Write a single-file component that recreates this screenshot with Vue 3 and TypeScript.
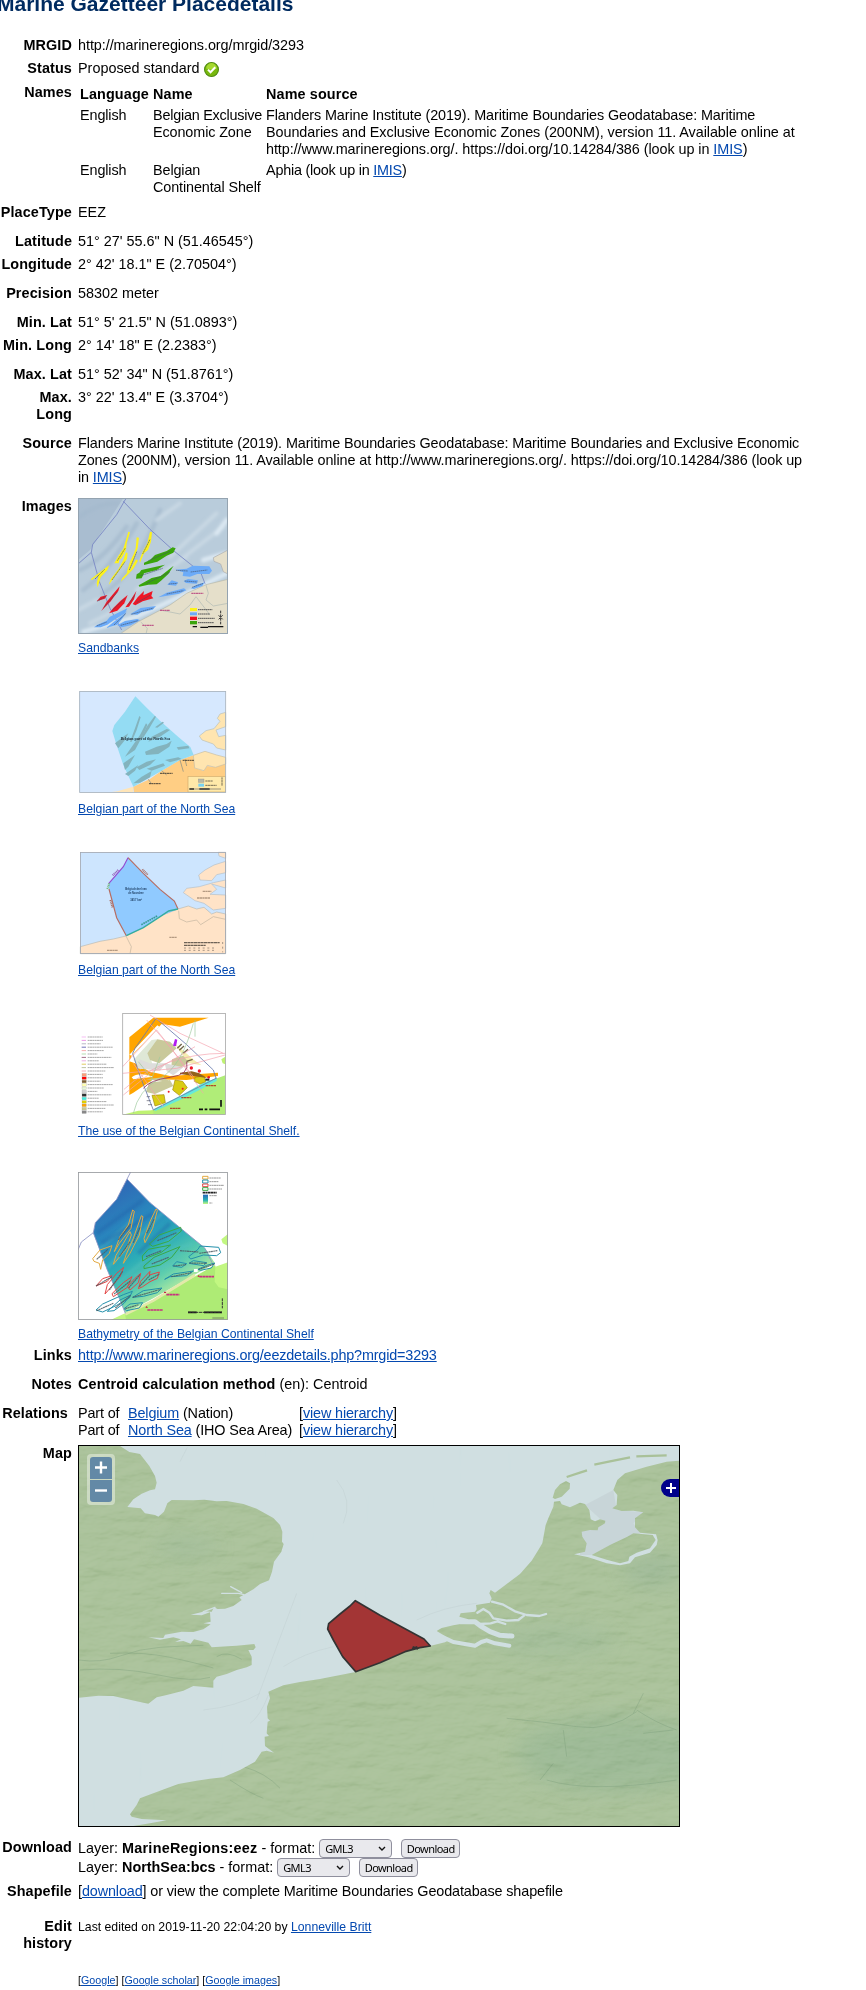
<script setup lang="ts">
interface Shape { d: string; c: string }

const layers = [
  { name: 'MarineRegions:eez', cls: 'spaced' },
  { name: 'NorthSea:bcs', cls: '' },
]
const relations = [
  { place: 'Belgium', kind: '(Nation)' },
  { place: 'North Sea', kind: '(IHO Sea Area)' },
]
const engines = ['Google', 'Google scholar', 'Google images']

const Y = '#fdf21c', G = '#3aa50c', R = '#ee1626', B = '#6cabf8'
const banks: Shape[] = [
  { c: Y, d: 'M175 125L180 127L170 160L168 180L155 204L148 210L146 220L133 220L145 198L160 176Z' },
  { c: Y, d: 'M200 142L207 143L203 175L190 212L176 247L170 248L180 215L192 190L197 175Z' },
  { c: Y, d: 'M240 125L246 127L243 155L234 180L222 190L210 218L208 212L218 185L232 160Z' },
  { c: Y, d: 'M168 187L173 190L171 206L155 232L116 285L122 268L145 238L160 210Z' },
  { c: Y, d: 'M198 208L204 212L190 236L153 275L157 264L180 240Z' },
  { c: Y, d: 'M62 268L118 225L112 240L92 262L83 292L80 280L86 255L66 270Z' },
  { c: G, d: 'M222 218L240 210L255 195L290 183L308 172L317 175L310 188L290 197L262 215L222 225Z' },
  { c: G, d: 'M208 248L214 240L285 224L260 240L222 250L215 265L198 266L200 253Z' },
  { c: G, d: 'M206 286L225 275L245 264L272 258L311 227L295 252L273 272L260 283L235 284L208 290Z' },
  { c: R, d: 'M80 334L92 320L112 315L104 326Z' },
  { c: R, d: 'M149 289L145 303L122 334L94 363L110 335Z' },
  { c: R, d: 'M173 315L163 340L142 362L117 370L130 354L152 332Z' },
  { c: R, d: 'M199 303L192 328L177 350L166 352L182 330Z' },
  { c: R, d: 'M222 303L220 316L248 303L244 318L250 325L218 334L196 346L188 342L203 322Z' },
  { c: B, d: 'M72 412L82 404L110 392L120 380L172 355L165 370L132 390L112 404L92 412Z' },
  { c: B, d: 'M160 374L172 362L158 384L142 404L108 414L130 397Z' },
  { c: B, d: 'M142 406L165 393L202 387L210 391L182 406L155 412Z' },
  { c: B, d: 'M180 373L212 354L258 348L248 359L214 367L202 374Z' },
  { c: B, d: 'M265 322L290 308L342 295L349 301L327 311Z' },
  { c: B, d: 'M292 284L305 271L324 277L318 287Z' },
  { c: B, d: 'M341 273L354 267L384 271L380 281L348 279Z' },
  { c: B, d: 'M316 239L350 236L368 227L418 229L426 242L418 252L382 252L360 260L338 258L340 247Z' },
  { c: B, d: 'M362 295L380 284L404 277L397 288L372 297Z' },
]
const greyBanks = [
  'M208 108L212 112L200 150L185 185L180 185L195 145Z', 'M254 108L258 110L238 145L215 180L210 182L230 140Z',
  'M228 130L232 134L222 160L195 210L165 230L175 215L210 165Z', 'M135 190L160 170L175 160L165 180L145 205Z',
  'M290 147L300 150L270 170L235 185L245 170Z', 'M278 125L282 128L262 143L255 142Z',
  'M225 215L260 200L290 192L305 182L298 200L265 222L228 225Z', 'M160 250L195 225L175 260L165 270Z',
  'M165 282L205 255L195 272L175 288Z', 'M200 262L230 245L258 238L240 255L208 270Z',
  'M190 310L215 290L245 273L240 292L210 308Z', 'M230 266L280 250L285 257L245 272Z',
  'M285 240L325 232L335 237L300 247Z', 'M320 202L355 197L358 205L325 209Z',
]
const bathyBanks: Shape[] = [
  { c: '#e3aa42', d: 'M188 150L193 154L183 205L148 250L133 275L150 230L175 195Z' },
  { c: '#e3aa42', d: 'M214 167L219 170L208 225L180 280L160 310L168 285L190 235Z' },
  { c: '#e3aa42', d: 'M258 147L262 151L248 205L225 248L222 235L240 185Z' },
  { c: '#e3aa42', d: 'M180 215L184 225L170 265L130 313L138 286L160 250Z' },
  { c: '#e3aa42', d: 'M68 296L90 270L126 257L118 280L98 300L92 328L88 310L72 304Z' },
  { c: '#39a944', d: 'M238 252L268 225L332 202L334 213L296 244L248 259Z' },
  { c: '#39a944', d: 'M217 288L235 268L302 255L274 277L235 292L218 303Z' },
  { c: '#39a944', d: 'M222 318L252 292L330 260L305 292L270 315L222 326Z' },
  { c: '#e44646', d: 'M161 322L150 350L105 402L112 374L140 340Z' },
  { c: '#e44646', d: 'M186 350L172 382L130 410L126 401L160 368Z' },
  { c: '#e44646', d: 'M212 340L205 368L180 390L172 380L195 355Z' },
  { c: '#e44646', d: 'M240 334L238 345L268 336L262 355L240 365L218 380L205 386L212 364Z' },
  { c: '#e44646', d: 'M78 378L98 356L126 347L112 364Z' },
  { c: '#2390ab', d: 'M78 450L98 432L160 404L187 394L178 414L140 436L98 456Z' },
  { c: '#2390ab', d: 'M112 454L150 420L182 405L162 430L132 452Z' },
  { c: '#2390ab', d: 'M162 446L180 432L218 428L208 444L170 452Z' },
  { c: '#2390ab', d: 'M188 412L220 392L276 384L262 398L220 409Z' },
  { c: '#2390ab', d: 'M284 358L310 342L370 333L350 347L300 350Z' },
  { c: '#2390ab', d: 'M308 318L320 305L350 311L335 322Z' },
  { c: '#2390ab', d: 'M357 310L370 302L410 308L400 317Z' },
  { c: '#2390ab', d: 'M356 290L384 268L390 258L446 262L452 278L440 287L400 285L362 297Z' },
  { c: '#2390ab', d: 'M384 328L410 316L434 309L424 324L392 331Z' },
]
const bankNames = [
  'M145 240L182 192', 'M148 290L180 245', 'M190 248L210 202', 'M230 220L252 178', 'M80 298L114 268',
  'M262 242L320 218', 'M228 290L274 272', 'M245 312L296 292', 'M78 378L126 350', 'M118 390L158 334',
  'M132 402L182 362', 'M176 384L210 344', 'M208 380L240 346', 'M236 360L268 342', 'M80 452L130 430',
  'M136 444L182 406', 'M166 446L206 434', 'M188 412L272 388', 'M304 350L364 338', 'M310 318L348 314',
  'M358 309L410 310', 'M330 272L386 276', 'M388 280L442 272', 'M386 328L434 312',
]
const useLegend: string[] = [
  '#f4b0f0', '#e884e0', '#aab', '#55a', '#f7a0a0', '#a5d8a0', '#905070', '#e7a0e0', '#d8c040', '#b0b890', '#f0a0b0',
  '#ffa07a', '#f00', '#806030', '#ffffb0', '#e8f8d8', '#d0d0d0', '#303030', '#40f0e0', '#e0d000', '#ffa500', '#c8c890', '#888',
]
const land = {
  england: 'M27 18L150 18L178 36L210 42L238 78L255 108L260 128L255 148L240 151L215 161L190 178L172 201L212 205L225 220L255 225L265 230L282 215L292 190L305 180L370 181L403 179L440 184L470 183L520 192L560 206L610 234L630 255L637 275L636 305L641 312L634 335L612 365L606 395L597 421L570 432L550 448L522 464L508 472L515 480L490 498L465 506L443 507L432 502L425 515L405 514L362 524L395 526L420 517L422 545L400 550L422 553L400 568L370 576L335 575L285 584L280 594L235 592L270 599L310 592L333 598L315 606L340 603L362 611L372 598L415 608L425 622L500 617L553 612L557 622L550 630L535 630L545 650L545 675L530 682L500 690L470 702L440 710L430 722L430 743L370 738L340 752L290 765L260 772L235 791L200 784L130 768L85 767L27 773Z',
  continent: 'M190 1158L240 1150L290 1141L215 1137L185 1130L180 1123L200 1095L210 1075L250 1060L325 1032L380 1022L420 1016L460 1012L510 990L555 965L575 935L590 932L612 938L585 918L584 890L597 888L590 880L593 845L600 842L593 835L591 800L600 775L595 755L640 736L690 726L750 717L857 696L930 668L1005 636L1080 618L1125 607L1138 600L1120 585L1100 573L1115 564L1150 556L1190 549L1195 538L1168 530L1172 520L1215 515L1220 508L1218 495L1260 488L1265 475L1258 460L1262 450L1275 458L1350 402L1385 362L1405 330L1417 310L1427 255L1435 235L1450 200L1452 185L1470 183L1475 193L1500 202L1530 188L1545 192L1558 210L1562 238L1575 244L1590 238L1606 242L1605 250L1585 262L1583 271L1560 270L1535 275L1537 290L1550 310L1545 335L1512 343L1555 352L1610 370L1650 376L1680 370L1695 352L1740 338L1760 315L1763 300L1758 283L1710 278L1695 262L1695 235L1720 217L1690 212L1655 213L1627 205L1640 195L1642 165L1630 150L1642 120L1665 100L1730 80L1790 65L1827 62L1827 1158Z',
  texel: 'M1448 173L1455 150L1470 133L1488 123L1500 130L1499 146L1475 170L1455 177Z',
  flevoland: 'M1565 345L1620 315L1672 290L1690 280L1748 285L1757 300L1740 325L1700 338L1678 350L1675 363L1650 370L1610 359Z',
}
const eez = 'M856 482L930 526L1062 597L1081 618L1050 623L1005 635L930 668L857 695L818 650L790 600L773 567L776 551L810 522L840 498Z'
const ridges = 'M27 660Q90 670 150 648T270 622T400 616M120 640Q220 635 300 652T430 684M30 690Q150 680 260 704T420 712M440 650Q470 630 515 658M480 1020Q540 1060 580 1075M520 980Q590 1000 630 1045M1310 835Q1420 845 1520 860T1700 815M1410 1020L1450 970M1700 810Q1760 850 1820 870M1430 1020Q1560 1060 1820 1020M1690 820L1720 760M1480 870L1490 950M1720 880L1810 870'
</script>

<template>
  <main class="page">
    <h1>Marine Gazetteer Placedetails</h1>

    <div class="row"><b class="label">MRGID</b><div class="snug">http://marineregions.org/mrgid/3293</div></div>
    <div class="row before-names">
      <b class="label">Status</b>
      <div class="status">Proposed standard
        <svg class="tick" viewBox="0 0 14 14"><circle cx="7" cy="7" r="6.5" fill="#78b80d" stroke="#4f8a12" /><path d="M2 6a5 5 0 0 1 10 0q-5 2-10 0" fill="#a6d92f" /><path d="M3.7 7.1L6.1 9.5L10.5 4.9" fill="none" stroke="#fff" stroke-width="1.9" /></svg>
      </div>
    </div>
    <div class="row">
      <b class="label">Names</b>
      <div class="names">
        <b>Language</b><b>Name</b><b>Name source</b>
        <span>English</span>
        <span><span class="close">Belgian Exclusive</span><br>Economic Zone</span>
        <span>Flanders Marine Institute (2019). Maritime Boundaries Geodatabase: Maritime<br><span class="eased">Boundaries and Exclusive Economic Zones (200NM), version 11. Available online at<br>http://www.marineregions.org/. https://doi.org/10.14284/386 (look up in <a>IMIS</a>)</span></span>
        <span>English</span>
        <span>Belgian<br>Continental Shelf</span>
        <span class="close">Aphia (look up in <a>IMIS</a>)</span>
      </div>
    </div>
    <div class="row wide"><b class="label">PlaceType</b><div>EEZ</div></div>
    <div class="row"><b class="label">Latitude</b><div>51° 27' 55.6" N (51.46545°)</div></div>
    <div class="row wide"><b class="label">Longitude</b><div>2° 42' 18.1" E (2.70504°)</div></div>
    <div class="row wide"><b class="label">Precision</b><div>58302 meter</div></div>
    <div class="row"><b class="label">Min. Lat</b><div>51° 5' 21.5" N (51.0893°)</div></div>
    <div class="row wide"><b class="label">Min. Long</b><div>2° 14' 18" E (2.2383°)</div></div>
    <div class="row"><b class="label">Max. Lat</b><div>51° 52' 34" N (51.8761°)</div></div>
    <div class="row wide"><b class="label">Max.<br>Long</b><div>3° 22' 13.4" E (3.3704°)</div></div>
    <div class="row wide">
      <b class="label">Source</b>
      <div class="tight">Flanders Marine Institute (2019). Maritime Boundaries Geodatabase: Maritime Boundaries and Exclusive Economic<br><span class="easy">Zones (200NM), version 11. Available online at http://www.marineregions.org/. https://doi.org/10.14284/386 (look up</span><br>in <a>IMIS</a>)</div>
    </div>

    <div class="row">
      <b class="label">Images</b>
      <div class="gallery">
        <figure>
          <svg class="thumb tall1" viewBox="24 24 450 408">
            <defs><filter id="soft"><feGaussianBlur stdDeviation="5" /></filter></defs>
            <rect x="24" y="24" width="450" height="408" fill="#b9ccdb" />
            <path d="M24 24H160L60 180L24 210Z" fill="#a9bdd0" />
            <g filter="url(#soft)" fill="none" stroke-linecap="round">
              <path d="M30 80Q80 40 140 40M40 300Q120 240 200 100M100 310Q200 250 270 60M30 240Q100 210 170 110" stroke="#a4b9cd" stroke-width="14" opacity=".7" />
              <path d="M300 200L440 70M330 210L460 110M200 300L350 200M60 400L200 330M260 90L330 40M24 360L80 330" stroke="#ccdbe6" stroke-width="12" opacity=".8" />
              <path d="M40 425L200 380L330 320L470 250M400 210L470 190M440 130L470 90" stroke="#dbe8f2" stroke-width="14" />
            </g>
            <path d="M150 432L205 395L300 345L350 310L408 284L474 268V432Z" fill="#e5dfca" stroke="#b8b8a8" stroke-width="2" />
            <path d="M474 180L430 203L432 214L452 222L460 245L474 252Z" fill="#e5dfca" stroke="#aaa" stroke-width="2" />
            <path d="M408 285L415 310L408 330L430 348L474 340M212 396L232 415L228 432M270 360L330 372L360 345L378 320L420 375" fill="none" stroke="#b9c0b8" stroke-width="2.5" />
            <path d="M24 222L64 187L68 163L140 74L165 30L170 24M160 34L240 118L312 183L392 247L405 281M64 187L88 275L120 355L155 420" fill="none" stroke="#7785c4" stroke-width="2.6" />
            <path v-for="s in banks" :key="s.d" :d="s.d" :fill="s.c" />
            <path d="M75 267L104 238M142 212L166 174M126 270L165 215M178 240L201 184M218 192L240 148M235 212L300 184M212 257L278 235M230 280L300 246M82 334L108 318M102 352L142 306M126 362L164 326M174 344L194 316M200 338L240 316M80 408L110 396M132 405L168 370M152 406L204 392M184 373L250 354M290 312L340 302M296 282L322 280M344 273L382 276M318 241L354 243M362 246L412 240M366 292L400 280" stroke="#435066" stroke-width="2.6" stroke-dasharray="5 1" opacity=".7" />
            <g fill="#fdf21c"><rect x="360" y="354" width="21" height="9" /><rect x="360" y="367" width="21" height="9" fill="#6cabf8" /><rect x="360" y="380" width="21" height="10" fill="#f01020" /><rect x="360" y="393" width="21" height="10" fill="#3aa50c" /></g>
            <path d="M384 359H427M384 372H420M384 385H434M384 398H432" stroke="#555" stroke-width="3" stroke-dasharray="5 1" />
            <path d="M364 310H400M270 361H300M217 406H252" stroke="#bf5b8a" stroke-width="3.5" stroke-dasharray="6 1" />
            <path d="M368 410H381M391 412H414M414 410H460" stroke="#111" stroke-width="4" /><path d="M452 362V405M446 388L458 376M446 376L458 388" stroke="#333" stroke-width="3" stroke-dasharray="8 3" />
            <rect x="25.500" y="25.500" width="447" height="405" fill="none" stroke="#94a3b0" stroke-width="3" />
          </svg>
          <a>Sandbanks</a>
        </figure>
        <figure>
          <svg class="thumb" viewBox="24 27 450 318">
            <rect x="28" y="34" width="439" height="303" fill="#d6e8fe" />
            <path d="M28 337L120 337L142 334L190 320V337Z" fill="#ffe5b8" />
            <path d="M190 320L240 297L275 272L330 240L370 226L377 246L374 264L400 272L412 258L436 262L467 250V337H192Z" fill="#ffce84" />
            <path d="M370 226L405 214L440 225L467 232V252L436 262L412 256L402 272L374 264Z" fill="#ffe5b0" stroke="#c5bea6" stroke-width="2" />
            <path d="M467 97L450 102L442 115L450 124L432 146L408 152L388 168L396 180L430 192L440 204L467 210V166L446 170L438 150L467 140Z" fill="#ffe5b0" stroke="#b9bfb8" stroke-width="2" />
            <path d="M196 49L230 83L270 122L325 171L361 201L371 225L330 240L270 275L190 320L160 255L138 190L127 153L133 135L165 95Z" fill="#94dcf3" />
            <path v-for="d in greyBanks" :key="d" :d="d" fill="#83b3bd" />
            <path d="M330 240L340 275M345 238L350 258M235 298L245 312M275 272L290 285" stroke="#aaa184" stroke-width="3" />
            <path d="M338 241H372M270 280H308M237 311H273" stroke="#4b4436" stroke-width="3" stroke-dasharray="6 1" />
            <text x="152" y="181" textLength="149" font-family="Liberation Serif, serif" font-weight="bold" font-size="12" fill="#202d38">Belgian part of the North Sea</text>
            <rect x="354" y="289" width="112" height="47" fill="#ffe9a9" stroke="#d1aa6b" stroke-width="2" />
            <rect x="385" y="297" width="17" height="10" fill="#b9b9a7" stroke="#888" /><rect x="385" y="311" width="17" height="9" fill="#79d3f3" />
            <path d="M406 303H428M406 316H440M456 292V318" stroke="#776d55" stroke-width="3" stroke-dasharray="7 1" /><path d="M358 327H372M388 327H419" stroke="#222" stroke-width="5" /><path d="M372 327H453" stroke="#666" stroke-width="2" />
            <rect x="29" y="34.500" width="438" height="303" fill="none" stroke="#a7b2bd" stroke-width="2.500" />
          </svg>
          <a>Belgian part of the North Sea</a>
        </figure>
        <figure>
          <svg class="thumb" viewBox="24 30 450 318">
            <rect x="31" y="37" width="436" height="304" fill="#cde5fe" />
            <path d="M31 320L90 304L130 297L168 288L220 262L270 228L324 207L355 198L380 207L402 202L425 222L440 216L467 222V341H31Z" fill="#ffe3c7" stroke="#b8b9b2" stroke-width="2" />
            <path d="M467 64L432 75L405 90L386 105L390 120L425 122L440 104L467 98ZM467 37H445L447 48L467 55ZM388 140L350 145L340 158L375 182L402 190L430 210L467 205V165L420 163L440 148L425 132L467 144V120L430 128Z" fill="#ffe3c7" stroke="#b3c0c8" stroke-width="2" />
            <path d="M174 53L220 100L270 148L313 183L324 207L275 227L220 263L169 287L140 233L117 147L116 131L160 80Z" fill="#90caff" />
            <path d="M174 53L220 100L270 148L313 183L324 207M169 287L140 233L117 147" fill="none" stroke="#b76d62" stroke-width="3.500" />
            <path d="M116 131L160 80L174 53" fill="none" stroke="#944bd1" stroke-width="3.500" /><path d="M169 287L220 263L275 227L296 213L324 207" fill="none" stroke="#35ad9e" stroke-width="4" />
            <path d="M112 147L118 130" stroke="#77b977" stroke-width="6" stroke-dasharray="3 2" /><path d="M128 106L145 90" stroke="#9360ba" stroke-width="6" stroke-dasharray="3 2" /><path d="M217 88L233 104M121 180L128 203" stroke="#a66e66" stroke-width="6" stroke-dasharray="3 2" /><path d="M214 254L263 227" stroke="#399b94" stroke-width="5" stroke-dasharray="5 2" />
            <path d="M168 288L184 320L180 341M326 212L328 236L350 246L380 240L392 254L430 230L467 238" fill="none" stroke="#c1b49e" stroke-width="2" />
            <g font-family="Liberation Sans, sans-serif" font-weight="bold" font-size="8" fill="#24466c"><text x="166" y="151" textLength="64">Belgisch deel van</text><text x="175" y="162" textLength="46">de Noordzee</text><text x="181" y="182" textLength="35">3457 km²</text></g>
            <path d="M111 331H144M298 292H320M381 174H420M398 154H424" stroke="#b49a82" stroke-width="4" stroke-dasharray="7 1" />
            <path d="M342 308H449M342 316H407" stroke="#3d3731" stroke-width="4" stroke-dasharray="9 1" opacity=".75" /><path d="M342 324H440M342 331H432M458 306V337" stroke="#796e65" stroke-width="2" stroke-dasharray="6 8" />
            <rect x="31.500" y="37.500" width="435" height="303" fill="none" stroke="#a2a8b2" stroke-width="2.500" />
          </svg>
          <a>Belgian part of the North Sea</a>
        </figure>
        <figure>
          <svg class="thumb" viewBox="24 33 450 318">
            <rect x="158" y="40" width="308" height="304" fill="#fff" />
            <path d="M250 53H416L330 80L275 72L185 168L178 184L195 190L240 215L300 228L444 218V228L350 240L250 238L190 278L178 285V112Z" fill="#ffa500" />
            <path d="M262 76L268 80L184 167L178 164ZM185 232Q205 215 250 230L190 238Z" fill="#fff" />
            <path d="M158 344L220 340L250 330L330 295L400 250L466 226V344Z" fill="#b0ed78" /><path d="M466 170L454 178L458 190L466 193ZM158 344L205 332L250 331V344Z" fill="#bff272" />
            <path d="M250 328L330 288L400 248L440 234V243L335 298L256 333Z" fill="#65e9db" />
            <path d="M190 180L245 120L262 118L240 170L250 200L210 208Z" fill="#dfe8d6" />
            <path d="M232 160L262 118L300 125L320 145L268 190L240 180ZM306 178L345 165L360 185L330 204L304 200ZM237 248L300 240L310 258L255 282L228 276ZM228 238L280 232L300 245Z" fill="#c9c99b" />
            <path d="M208 178L240 190L288 190L270 212L200 205ZM284 190L340 202L310 226L290 214Z" fill="#dddddb" />
            <path d="M314 130L372 180L395 196L358 190L330 155Z" fill="#f5edb0" />
            <path d="M246 286L282 284L286 308L255 318ZM315 240L338 244L352 263L328 286L308 270ZM375 232L402 228L407 245L390 252L373 244Z" fill="#d9cc13" stroke="#a28a10" stroke-width="2" />
            <path d="M330 218L365 214L388 220L410 234L370 228L330 222Z" fill="#92611b" /><path d="M309 137L315 117L322 119L318 139Z" fill="#b11bf0" />
            <path d="M322 145L335 132M328 151L342 138M340 160L354 148M350 184L368 178" stroke="#6e6548" stroke-width="4" />
            <path d="M258 55L350 134L390 172L430 210L438 235M258 55L195 145L188 160L210 228L250 330L440 234" fill="none" stroke="#6879ad" stroke-width="2.500" />
            <path d="M240 45L330 100L460 160M158 200L260 90L370 230M158 220L320 205L465 165M162 268Q280 160 465 160M160 285L240 220L375 140M230 60L300 140L400 280M190 190L280 320" fill="none" stroke="#f5a1ad" stroke-width="2" />
            <path d="M190 340Q205 270 270 235T370 70M375 60V110M205 185L245 235M270 170L240 250" fill="none" stroke="#9bc99b" stroke-width="2" />
            <path d="M220 265Q240 240 300 232T350 185" fill="none" stroke="#94345f" stroke-width="2.500" />
            <g fill="#ee1626"><circle cx="364" cy="204" r="5" /><circle cx="388" cy="213" r="5" /><circle cx="416" cy="232" r="4" /><circle cx="338" cy="266" r="3" /><circle cx="296" cy="275" r="3" /></g><rect x="406" y="236" width="12" height="6" fill="#222" />
            <path d="M407 257H438M334 293H364M300 325H332" stroke="#b14b29" stroke-width="4" stroke-dasharray="7 1" /><path d="M387 328H399M404 328H412M418 328H450M453 300V320" stroke="#111" stroke-width="5" /><path d="M230 290H240M230 302H242M234 314H246" stroke="#556" stroke-width="2" />
            <g v-for="(c, i) in useLegend" :key="i">
              <path v-if="i < 11" :d="`M35 ${111 + i * 10.2}H48`" :stroke="c" stroke-width="2.5" />
              <rect v-else x="36" :y="108 + i * 10.2" width="13" height="8" :fill="c" stroke="#999" stroke-width=".7" />
              <path :d="`M53 ${111 + i * 10.2}H${[98, 99, 92, 128, 102, 82, 124, 86, 110, 132, 106][i % 11]}`" stroke="#9b9b9b" stroke-width="2.6" stroke-dasharray="6 1" />
            </g>
            <rect x="158" y="40.500" width="308.500" height="303" fill="none" stroke="#aaa" stroke-width="2.500" />
          </svg>
          <a>The use of the Belgian Continental Shelf.</a>
        </figure>
        <figure>
          <svg class="thumb tall5" viewBox="24 36 450 444">
            <defs>
              <linearGradient id="depth" x1=".18" y1=".08" x2=".7" y2="1"><stop stop-color="#2f6ab6" /><stop offset=".3" stop-color="#288cbf" /><stop offset=".5" stop-color="#2cadb7" /><stop offset=".7" stop-color="#5fceae" /><stop offset=".87" stop-color="#bff09d" /></linearGradient>
              <linearGradient id="scale" x2="0" y2="1"><stop stop-color="#2866b8" /><stop offset=".6" stop-color="#29b4b5" /><stop offset="1" stop-color="#c7fa80" /></linearGradient>
              <clipPath id="shelf"><path d="M171 57L240 128L330 203L405 265L435 310L382 328L250 400L166 443L150 420L112 330L70 220L76 188L140 118Z" /></clipPath>
            </defs>
            <rect x="24" y="36" width="450" height="444" fill="#fff" />
            <path d="M125 480L165 463L250 420L382 345L435 315L440 330L474 310V480Z" fill="#aeeb75" /><path d="M474 307L436 320L434 365L446 382L474 388ZM474 222L454 238L458 250L474 258ZM122 480L165 460L168 480Z" fill="#c2f781" />
            <path d="M171 57L240 128L330 203L405 265L435 310L382 340L250 415L166 460L150 420L112 330L70 220L76 188L140 118Z" fill="url(#depth)" />
            <g clip-path="url(#shelf)"><path d="M80 275L190 180M110 325L290 145M140 370L330 215M160 420L290 260M220 300L370 250M190 350L340 300" stroke="#58c3c3" stroke-width="9" opacity=".4" filter="url(#soft)" /><path d="M80 220L220 120M95 250L250 160M205 280L300 190" stroke="#205fa9" stroke-width="12" opacity=".4" filter="url(#soft)" /></g>
            <path d="M166 463L250 422L375 345" fill="none" stroke="#e3e9a9" stroke-width="8" />
            <path d="M24 270L34 246L70 218L76 188L140 118L182 36M171 57L240 128L330 203L405 265L428 312M70 218L112 330L150 420L166 460" fill="none" stroke="#8a91c4" stroke-width="2.500" />
            <path v-for="s in bathyBanks" :key="s.d" :d="s.d" fill="none" :stroke="s.c" stroke-width="3" />
            <path v-for="d in bankNames" :key="d" :d="d" fill="none" stroke="#4c5a61" stroke-width="3.500" stroke-dasharray="6 1" opacity=".85" />
            <rect x="372" y="327" width="11" height="9" fill="#fff" />
            <path d="M386 345L382 350H390ZM285 394L281 399H289ZM230 438L226 443H234Z" fill="#bc1b35" /><path d="M388 350H432M289 404H328M232 450H279" stroke="#c83180" stroke-width="5" stroke-dasharray="8 1" />
            <g fill="none" stroke-width="3"><path d="M398 49H414V57H398Z" stroke="#e3aa42" /><path d="M398 60H414V69H398Z" stroke="#2390ab" /><path d="M398 72H414V80H398Z" stroke="#e44646" /><path d="M398 83H414V91H398Z" stroke="#39a944" /></g>
            <path d="M418 54H453M418 65H445M418 76H462M418 87H456M418 107H441M418 129H427" stroke="#999" stroke-width="3" stroke-dasharray="6 1" /><path d="M398 98H440" stroke="#222" stroke-width="5" stroke-dasharray="7 1" /><rect x="399" y="104" width="15" height="28" fill="url(#scale)" />
            <path d="M354 457H380M402 457H456" stroke="#111" stroke-width="5" /><path d="M354 457H456M457 415V445" stroke="#333" stroke-width="3" stroke-dasharray="9 2" /><path d="M427 474H462" stroke="#758465" stroke-width="3" />
            <rect x="25.500" y="37.500" width="447" height="441" fill="none" stroke="#969a9d" stroke-width="2.500" />
          </svg>
          <a>Bathymetry of the Belgian Continental Shelf</a>
        </figure>
      </div>
    </div>

    <div class="row wide"><b class="label">Links</b><div class="url"><a>http://www.marineregions.org/eezdetails.php?mrgid=3293</a></div></div>
    <div class="row wide"><b class="label">Notes</b><div><b>Centroid calculation method</b> (en): Centroid</div></div>
    <div class="row">
      <b class="label inset">Relations</b>
      <div class="relations">
        <template v-for="r in relations" :key="r.place">
          <span>Part of</span><span><a>{{ r.place }}</a> {{ r.kind }}</span><span>[<a>view hierarchy</a>]</span>
        </template>
      </div>
    </div>
    <div class="row map-row">
      <b class="label">Map</b>
      <div class="map">
        <svg class="chart" viewBox="27 18 1800 1140">
          <defs>
            <clipPath id="coast"><path v-for="(d, k) in land" :key="k" :d="d" /></clipPath>
            <filter id="relief" x="0" y="0" width="100%" height="100%" color-interpolation-filters="sRGB"><feTurbulence type="fractalNoise" baseFrequency=".01 .025" numOctaves="4" seed="8" /><feDiffuseLighting surfaceScale="9" lighting-color="#fff" diffuseConstant=".66"><feDistantLight azimuth="235" elevation="60" /></feDiffuseLighting></filter>
            <filter id="swell" x="0" y="0" width="100%" height="100%" color-interpolation-filters="sRGB"><feTurbulence type="fractalNoise" baseFrequency=".018 .003" numOctaves="3" seed="4" /><feDiffuseLighting surfaceScale="5" lighting-color="#fff" diffuseConstant=".56"><feDistantLight azimuth="225" elevation="65" /></feDiffuseLighting></filter>
            <filter id="haze"><feGaussianBlur stdDeviation="28" /></filter>
          </defs>
          <rect x="27" y="18" width="1800" height="1140" fill="#d0dfe1" />
          <rect class="swell" x="27" y="18" width="1800" height="1140" filter="url(#swell)" />
          <path d="M330 65Q340 45 352 22M540 850Q570 830 595 765M560 780Q620 620 680 460M400 810Q500 800 570 760M640 680Q700 640 790 620M800 120Q850 180 820 250M1040 540Q1120 500 1220 490" fill="none" stroke="#c3d1d4" stroke-width="3" opacity=".55" />
          <path d="M1545 195L1630 150L1640 210L1720 217L1690 250L1710 280L1565 345L1530 345L1530 270L1605 250Z" fill="#c8d5d8" />
          <g clip-path="url(#coast)">
            <rect x="27" y="18" width="1800" height="1140" fill="#a9c199" />
            <g filter="url(#haze)" opacity=".55"><ellipse cx="1640" cy="940" rx="300" ry="120" fill="#93b492" /><ellipse cx="350" cy="320" rx="90" ry="30" fill="#9ab796" /><ellipse cx="1750" cy="390" rx="90" ry="50" fill="#96b495" /><ellipse cx="1450" cy="600" rx="180" ry="50" fill="#9dba98" /></g>
            <rect class="relief" x="27" y="18" width="1800" height="1140" filter="url(#relief)" />
            <path :d="ridges" fill="none" stroke="#789b78" stroke-width="2.500" opacity=".45" />
          </g>
          <g fill="none" stroke="#d0dfe1" stroke-linejoin="round" stroke-linecap="round">
            <path d="M1120 592L1150 606L1215 617L1234 606L1250 601L1275 610L1318 617" stroke-width="12" />
            <path d="M1172 545L1215 545L1235 560L1260 575L1290 586L1326 588" stroke-width="15" /><path d="M1228 552L1262 550L1282 544L1306 552M1222 518L1240 507L1258 518L1270 535L1310 542L1345 540L1362 527" stroke-width="7" />
            <path d="M1266 485L1300 494L1335 514L1370 525L1408 528L1428 522" stroke-width="7" /><path d="M455 460H505L522 464M482 440L515 458M400 515L435 502" stroke-width="4" />
          </g>
          <path d="M1490 111L1530 98L1551 91M1573 74L1620 64L1680 52M1699 49L1790 46" fill="none" stroke="#a9c199" stroke-width="7" />
          <path :d="eez" fill="#a33535" stroke="#333" stroke-width="5" stroke-linejoin="round" /><path d="M1026 626L1042 620M1028 620L1044 627" stroke="#333" stroke-width="5" />
        </svg>
        <div class="zoomer">
          <button aria-label="Zoom in"><svg viewBox="0 0 22 22"><path d="M5 10.500H17M11 4.500V16.500" /></svg></button>
          <button aria-label="Zoom out"><svg viewBox="0 0 22 22"><path d="M5 10.500H17" /></svg></button>
        </div>
        <button class="expand" aria-label="Layers"><svg viewBox="0 0 18 18"><path d="M5 9H15M10 4V14" stroke="#fff" stroke-width="2" /></svg></button>
      </div>
    </div>
    <div class="row">
      <b class="label">Download</b>
      <div>
        <div v-for="l in layers" :key="l.name" class="layer">
          <span>Layer: <b :class="l.cls">{{ l.name }}</b> - format:</span>
          <span class="picker"><select><option>GML3</option></select><svg viewBox="0 0 8 6"><path d="M1 1L4 4L7 1" fill="none" stroke="#111" stroke-width="1.400" /></svg></span>
          <button class="download">Download</button>
        </div>
      </div>
    </div>
    <div class="row shape-row"><b class="label">Shapefile</b><div class="tight">[<a>download</a>] or view the complete Maritime Boundaries Geodatabase shapefile</div></div>
    <div class="row edit-row"><b class="label">Edit<br>history</b><div class="edited">Last edited on 2019-11-20 22:04:20 by <a>Lonneville Britt</a></div></div>
    <div class="search"><span v-for="e in engines" :key="e">[<a>{{ e }}</a>]</span></div>
  </main>
</template>

<style>
body { background: #fff; overflow-x: hidden; }
</style>
<style scoped>
.page { height: 1990px; overflow: hidden; color: #000; font: 14.4px/17px "Liberation Sans", Arial, sans-serif; }
h1 { margin: -8px 0 22px -3px; font-size: 21px; line-height: 23px; color: #002b60; white-space: nowrap; }
a { color: #0449b0; text-decoration: underline; }
b { letter-spacing: .12px; }
.row { display: grid; grid-template-columns: 72px 1fr; column-gap: 6px; margin-bottom: 6px; white-space: nowrap; }
.wide { margin-bottom: 12px; }
.before-names { margin-bottom: 7px; }
.label { text-align: right; }
.inset { padding-right: 4px; }
.snug { letter-spacing: -.06px; }
.tight { letter-spacing: -.12px; }
.easy { letter-spacing: -.085px; }
.url { letter-spacing: -.165px; }
.status { height: 17px; }
.tick { width: 15px; height: 15px; vertical-align: -4px; }
.names { display: grid; grid-template-columns: 73px 113px auto; justify-content: start; row-gap: 4px; padding: 2px 0 2px 2px; }
.names span { letter-spacing: -.11px; }
.names span.eased { letter-spacing: -.065px; }
.names span.close { letter-spacing: -.22px; }
.gallery { display: flex; flex-direction: column; gap: 34px; }
figure { margin: 0; display: flex; flex-direction: column; align-items: flex-start; gap: 7px; font-size: 12.2px; line-height: 14px; }
.thumb { display: block; width: 150px; height: 106px; }
.tall1 { height: 136px; }
.tall5 { height: 148px; }
.relations { display: grid; grid-template-columns: 50px 171px auto; justify-content: start; letter-spacing: -.13px; }
.map-row { margin-bottom: 12px; }
.map { position: relative; box-sizing: border-box; width: 602px; height: 382px; border: 1px solid #000; overflow: hidden; }
.chart { display: block; width: 600px; height: 380px; }
.relief { mix-blend-mode: soft-light; opacity: .42; }
.swell { mix-blend-mode: soft-light; opacity: .18; }
.zoomer { position: absolute; left: 8px; top: 8px; padding: 3px; border-radius: 4px; background: rgba(255, 255, 255, .4); display: grid; gap: 1px; }
.zoomer button { width: 22px; height: 22px; padding: 0; border: 0; background: #6389a6; border-radius: 3px 3px 0 0; }
.zoomer button + button { border-radius: 0 0 3px 3px; }
.zoomer svg { display: block; width: 22px; height: 22px; stroke: #fff; stroke-width: 2.4; }
.expand { position: absolute; right: 0; top: 33px; width: 18px; height: 18px; padding: 0; border: 0; border-radius: 9px 0 0 9px; background: #00008b; }
.expand svg { display: block; width: 18px; height: 18px; }
.layer { display: flex; align-items: center; height: 19px; }
.layer b { letter-spacing: 0; }
.layer b.spaced { letter-spacing: .26px; }
.picker { position: relative; margin-left: 4px; width: 73px; height: 19px; }
.picker svg { position: absolute; right: 6px; top: 7px; width: 8px; height: 6px; }
select, .download { box-sizing: border-box; height: 19px; margin: 0; border: 1px solid #8f8f9d; border-radius: 4px; background: #e9e9ed; color: #000; font: 11px/15px "Noto Sans", sans-serif; letter-spacing: -.55px; }
select { display: block; width: 73px; padding: 0 5px; appearance: none; }
.download { width: 59px; margin-left: 9px; padding: 0; }
.shape-row { margin-bottom: 18px; }
.edit-row { margin-bottom: 22px; }
.edited { font-size: 12.25px; padding-top: 1px; }
.search { display: flex; gap: 3px; padding-left: 78px; font-size: 10.7px; line-height: 12px; }
</style>
